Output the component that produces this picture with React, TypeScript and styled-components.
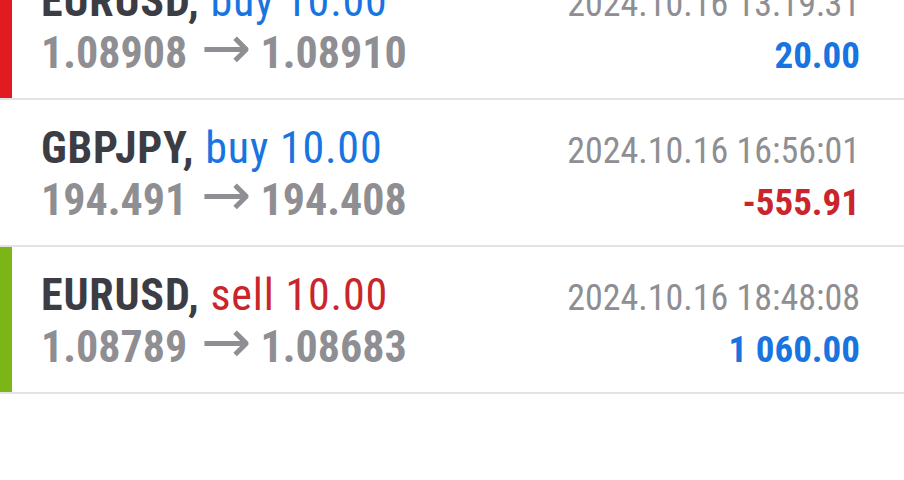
import { ReactElement } from 'react';
import styled, { createGlobalStyle } from 'styled-components';

type Side = 'buy' | 'sell';

interface Deal {
  symbol: string;
  side: Side;
  volume: string;
  openPrice: string;
  closePrice: string;
  time: string;
  profit: string;
  marker?: string;
}

const deals: Deal[] = [
  { symbol: 'EURUSD', side: 'buy', volume: '10.00', openPrice: '1.08908', closePrice: '1.08910', time: '2024.10.16 13:19:31', profit: '20.00', marker: '#e01b22' },
  { symbol: 'GBPJPY', side: 'buy', volume: '10.00', openPrice: '194.491', closePrice: '194.408', time: '2024.10.16 16:56:01', profit: '-555.91' },
  { symbol: 'EURUSD', side: 'sell', volume: '10.00', openPrice: '1.08789', closePrice: '1.08683', time: '2024.10.16 18:48:08', profit: '1 060.00', marker: '#7cb518' },
];

const GlobalStyle = createGlobalStyle`
  html, body {
    margin: 0;
    background: #fff;
    overflow: hidden;
  }
  body {
    font-family: "Roboto Condensed", Roboto, "Liberation Sans", sans-serif;
  }
`;

const Page = styled.div`
  background: #fff;
  height: 480px;
  overflow: hidden;
  width: 904px;
`;

const List = styled.div`
  display: flex;
  flex-direction: column;
  margin-top: -47px;
`;

const Row = styled.div`
  border-bottom: 2px solid #e3e3e3;
  display: flex;
  height: 145px;
`;

const Marker = styled.div<{ $color?: string }>`
  background: ${(p) => p.$color || 'transparent'};
  flex: 0 0 12px;
`;

const Content = styled.div`
  align-items: baseline;
  display: grid;
  flex: 1;
  grid-template-columns: 1fr auto;
  grid-template-rows: 52px 52px;
  padding: 22px 44px 19px 29px;
`;

const Title = styled.div`
  color: #3c3c44;
  font-size: 44px;
  font-weight: 700;
  letter-spacing: 0.8px;
  line-height: 52px;
  white-space: nowrap;
`;

const Action = styled.span<{ $side: Side }>`
  color: ${(p) => (p.$side === 'buy' ? '#1874e0' : '#c9252b')};
  font-weight: 400;
`;

const Prices = styled.div`
  color: #8e8e93;
  font-size: 44px;
  font-weight: 700;
  line-height: 52px;
  white-space: nowrap;
`;

const Arrow = styled.span`
  font-family: "DejaVu Sans", sans-serif;
  font-size: 60px;
  font-weight: 400;
  line-height: 0;
  margin: 0 9px 0 14px;
`;

const Time = styled.div`
  color: #8e8e93;
  font-size: 36px;
  line-height: 52px;
  text-align: right;
  white-space: nowrap;
`;

const Profit = styled.div<{ $negative: boolean }>`
  color: ${(p) => (p.$negative ? '#c9252b' : '#1874e0')};
  font-size: 37px;
  font-weight: 700;
  line-height: 52px;
  text-align: right;
  white-space: nowrap;
`;

export default function App(): ReactElement {
  return (
    <Page>
      <GlobalStyle />
      <List>
        { deals.map((d, i) => (
          <Row key={ i }>
            <Marker $color={ d.marker } />
            <Content>
              <Title>
                { d.symbol }, <Action $side={ d.side }>{ d.side } { d.volume }</Action>
              </Title>
              <Time>{ d.time }</Time>
              <Prices>{ d.openPrice }<Arrow>→</Arrow>{ d.closePrice }</Prices>
              <Profit $negative={ d.profit.startsWith('-') }>{ d.profit }</Profit>
            </Content>
          </Row>
        )) }
      </List>
    </Page>
  );
}
